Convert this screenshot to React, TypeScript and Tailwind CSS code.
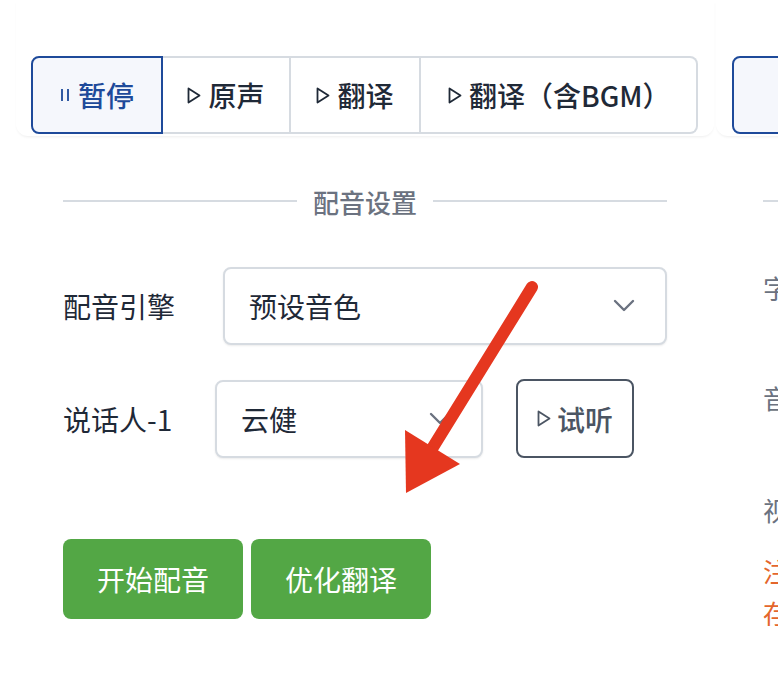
import React from "react";

const font = { fontFamily: '"Noto Sans CJK SC", "Noto Sans", sans-serif' };

function PlayIcon({ className = "" }: { className?: string }) {
  return (
    <svg width="14" height="17" viewBox="0 0 14 17" className={className}>
      <path d="M1.5 1.5 L12.5 8.5 L1.5 15.5 Z" fill="none" stroke="currentColor" strokeWidth="1.8" strokeLinejoin="round" />
    </svg>
  );
}

function PauseIcon() {
  return (
    <svg width="10" height="16" viewBox="0 0 10 16">
      <path d="M2 2 V14 M8 2 V14" stroke="currentColor" strokeWidth="1.8" />
    </svg>
  );
}

function Chevron() {
  return (
    <svg width="22" height="14" viewBox="0 0 22 14">
      <path d="M2 2 L11 11 L20 2" fill="none" stroke="#6b7280" strokeWidth="2.4" strokeLinecap="round" strokeLinejoin="round" />
    </svg>
  );
}

function Select({ value, width }: { value: string; width: string }) {
  return (
    <div
      className={`${width} h-[78px] flex items-center justify-between rounded-[8px] border-2 border-[#d6dbe1] bg-white pl-[24px] pr-[30px] shadow-[0_1px_2px_rgba(0,0,0,0.08)]`}
    >
      <span className="text-[28px] text-[#1f2937]">{value}</span>
      <Chevron />
    </div>
  );
}

export default function App() {
  return (
    <div className="relative h-[694px] w-[778px] overflow-hidden bg-white" style={font}>
      <div className="flex gap-[2px] pl-[16px]">
        {/* left panel */}
        <div className="w-[698px] shrink-0">
          <div className="rounded-b-[12px] px-[15px] pt-[56px] pb-[2px] shadow-[0_2px_3px_-1px_rgba(0,0,0,0.07)]">
            <div className="flex h-[78px]">
              <div className="flex w-[132px] items-center justify-center gap-[8px] rounded-l-[8px] border-2 border-[#1e4a9a] bg-[#f5f7fc] text-[28px] font-medium text-[#1e4a9a]">
                <PauseIcon />
                <span>暂停</span>
              </div>
              {[
                { t: "原声", w: "w-[128px]" },
                { t: "翻译", w: "w-[130px]" },
                { t: "翻译（含BGM）", w: "w-[277px] rounded-r-[8px] justify-start pl-[27px]" },
              ].map((b) => (
                <div
                  key={b.t}
                  className={`${b.w} flex items-center justify-center gap-[7px] border-y-2 border-r-2 border-[#d6dbe1] bg-white text-[28px] font-medium text-[#1f2937]`}
                >
                  <PlayIcon />
                  <span>{b.t}</span>
                </div>
              ))}
            </div>
          </div>

          <div className="px-[47px]">
            <div className="mt-[47px] flex h-[36px] items-center gap-[16px]">
              <div className="h-[2px] flex-1 bg-[#d6dbe1]" />
              <span className="text-[26px] font-medium text-[#6b7280]">配音设置</span>
              <div className="h-[2px] flex-1 bg-[#d6dbe1]" />
            </div>

            <div className="mt-[48px] flex items-center">
              <span className="w-[160px] text-[28px] text-[#1f2937]">配音引擎</span>
              <Select value="预设音色" width="w-[444px]" />
            </div>

            <div className="mt-[34px] flex items-center">
              <span className="w-[152px] text-[28px] text-[#1f2937]">说话人-1</span>
              <Select value="云健" width="w-[268px]" />
              <div className="ml-[33px] flex h-[79px] w-[118px] items-center justify-center gap-[6px] rounded-[8px] border-2 border-[#4b5563] text-[28px] font-medium text-[#4b5563]">
                <PlayIcon />
                <span>试听</span>
              </div>
            </div>

            <div className="mt-[81px] flex gap-[8px]">
              <div className="flex h-[80px] w-[180px] items-center justify-center rounded-[8px] bg-[#53a745] text-[28px] text-white">
                开始配音
              </div>
              <div className="flex h-[80px] w-[180px] items-center justify-center rounded-[8px] bg-[#53a745] text-[28px] text-white">
                优化翻译
              </div>
            </div>
          </div>
        </div>

        {/* right panel, clipped by the window */}
        <div className="w-[400px] shrink-0">
          <div className="rounded-b-[12px] px-[16px] pt-[56px] pb-[2px] shadow-[0_2px_3px_-1px_rgba(0,0,0,0.07)]">
            <div className="flex h-[78px] w-[200px] items-center justify-center rounded-l-[8px] border-2 border-[#1e4a9a] bg-[#f5f7fc] text-[28px] font-medium text-[#1e4a9a]">
              字幕
            </div>
          </div>
          <div className="pl-[47px] whitespace-nowrap">
            <div className="mt-[64px] h-[2px] w-[300px] bg-[#d6dbe1]" />
            <div className="mt-[68px] text-[26px] leading-[36px] text-[#6b7280]">字幕样式</div>
            <div className="mt-[74px] text-[26px] leading-[36px] text-[#6b7280]">音量</div>
            <div className="mt-[76px] text-[26px] leading-[36px] text-[#6b7280]">视频</div>
            <div className="mt-[22px] text-[26px] leading-[42px] text-[#e4662c]">
              <div>注意：</div>
              <div>存储</div>
            </div>
          </div>
        </div>
      </div>

      {/* annotation arrow */}
      <svg className="pointer-events-none absolute left-0 top-0" width="778" height="694" viewBox="0 0 778 694">
        <line x1="532" y1="287" x2="430" y2="452" stroke="#e5371f" strokeWidth="12" strokeLinecap="round" />
        <polygon points="405,430 460,464 406,493" fill="#e5371f" />
      </svg>
    </div>
  );
}
